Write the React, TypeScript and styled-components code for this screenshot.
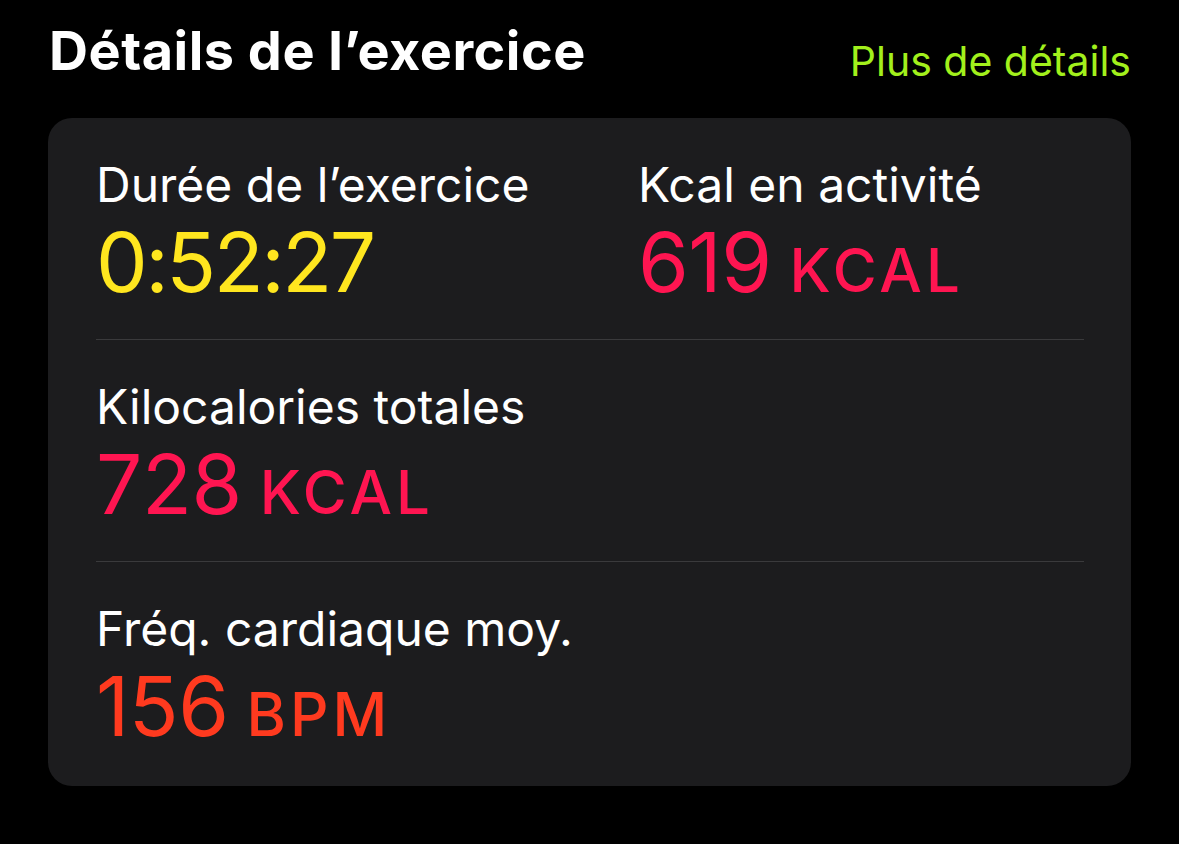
import React from "react";
import styled, { createGlobalStyle } from "styled-components";

const Global = createGlobalStyle`
  html, body { margin: 0; padding: 0; background: #000; }
  body { font-family: Inter, "Noto Sans", sans-serif; -webkit-font-smoothing: antialiased; }
`;

const Page = styled.div`
  width: 1179px;
  height: 844px;
  background: #000;
  padding: 22px 48px 0 48px;
  box-sizing: border-box;
`;

const Header = styled.div`
  display: flex;
  align-items: flex-start;
  justify-content: space-between;
  padding: 0 0 0 1px;
  height: 96px;
`;

const Title = styled.h1`
  margin: 0;
  color: #fff;
  font-size: 54px;
  font-weight: 700;
  line-height: 58px;
  letter-spacing: 0.5px;
`;

const MoreLink = styled.a`
  margin-top: 10px;
  color: #a2f01c;
  font-size: 41px;
  font-weight: 400;
  line-height: 58px;
  text-decoration: none;
`;

const Card = styled.div`
  background: #1c1c1e;
  border-radius: 24px;
  padding: 0 47px 0 48px;
  height: 668px;
  box-sizing: border-box;
`;

const Row = styled.div<{ $last?: boolean }>`
  display: grid;
  grid-template-columns: 542px 1fr;
  padding-top: 42px;
  height: 222px;
  box-sizing: border-box;
  border-bottom: ${(p) => (p.$last ? "none" : "1px solid #3a3a3c")};
`;

const Metric = styled.div`
  display: flex;
  flex-direction: column;
`;

const Label = styled.div`
  color: #fff;
  font-size: 48px;
  line-height: 50px;
  font-weight: 400;
`;

const Value = styled.div<{ $color: string; $tight?: boolean }>`
  margin-top: 8px;
  color: ${(p) => p.$color};
  font-size: 82px;
  line-height: 90px;
  font-weight: 400;
  letter-spacing: ${(p) => (p.$tight ? "-2.5px" : "-0.5px")};
  display: flex;
  align-items: baseline;
  gap: 18px;
`;

const Unit = styled.span`
  font-size: 60px;
  font-weight: 500;
  letter-spacing: 4px;
`;

const YELLOW = "#ffe61f";
const PINK = "#ff1551";
const RED = "#ff3a1f";

export default function App() {
  return (
    <>
      <Global />
      <Page>
        <Header>
          <Title>Détails de l’exercice</Title>
          <MoreLink>Plus de détails</MoreLink>
        </Header>
        <Card>
          <Row>
            <Metric>
              <Label>Durée de l’exercice</Label>
              <Value $color={YELLOW} $tight>
                0:52:27
              </Value>
            </Metric>
            <Metric>
              <Label>Kcal en activité</Label>
              <Value $color={PINK}>
                619<Unit>KCAL</Unit>
              </Value>
            </Metric>
          </Row>
          <Row>
            <Metric>
              <Label>Kilocalories totales</Label>
              <Value $color={PINK}>
                728<Unit>KCAL</Unit>
              </Value>
            </Metric>
          </Row>
          <Row $last>
            <Metric>
              <Label>Fréq. cardiaque moy.</Label>
              <Value $color={RED}>
                156<Unit>BPM</Unit>
              </Value>
            </Metric>
          </Row>
        </Card>
      </Page>
    </>
  );
}
